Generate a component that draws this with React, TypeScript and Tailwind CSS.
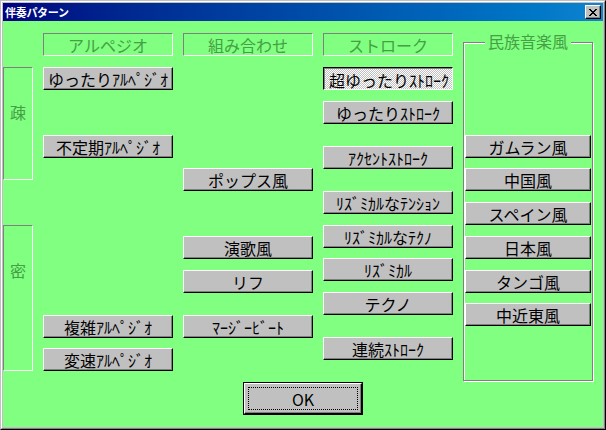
import type { ReactNode } from "react";

const FONT = "font-['Noto_Sans_CJK_JP','Noto_Sans_CJK_SC',sans-serif]";

type Item = { label: string; cls: string; pressed?: boolean };

const arpeggio: Item[] = [
  { label: "ゆったりｱﾙﾍﾟｼﾞｵ", cls: "mt-[11px]" },
  { label: "不定期ｱﾙﾍﾟｼﾞｵ", cls: "mt-[45px]" },
  { label: "複雑ｱﾙﾍﾟｼﾞｵ", cls: "mt-[157px]" },
  { label: "変速ｱﾙﾍﾟｼﾞｵ", cls: "mt-[10px]" },
];

const combo: Item[] = [
  { label: "ポップス風", cls: "mt-[112px]" },
  { label: "演歌風", cls: "mt-[45px]" },
  { label: "リフ", cls: "mt-[11px]" },
  { label: "ﾏｰｼﾞｰﾋﾞｰﾄ", cls: "mt-[22px]" },
];

const stroke: Item[] = [
  { label: "超ゆったりｽﾄﾛｰｸ", cls: "mt-[11px]", pressed: true },
  { label: "ゆったりｽﾄﾛｰｸ", cls: "mt-[11px]" },
  { label: "ｱｸｾﾝﾄｽﾄﾛｰｸ", cls: "mt-[22px]" },
  { label: "ﾘｽﾞﾐｶﾙなﾃﾝｼｮﾝ", cls: "mt-[22px]" },
  { label: "ﾘｽﾞﾐｶﾙなﾃｸﾉ", cls: "mt-[11px]" },
  { label: "ﾘｽﾞﾐｶﾙ", cls: "mt-[10px]" },
  { label: "テクノ", cls: "mt-[11px]" },
  { label: "連続ｽﾄﾛｰｸ", cls: "mt-[22px]" },
];

const ethnic: Item[] = [
  { label: "ガムラン風", cls: "mt-[92px]" },
  { label: "中国風", cls: "mt-[10px]" },
  { label: "スペイン風", cls: "mt-[11px]" },
  { label: "日本風", cls: "mt-[11px]" },
  { label: "タンゴ風", cls: "mt-[11px]" },
  { label: "中近東風", cls: "mt-[10px]" },
];

function Btn({ item, width = "w-[130px]" }: { item: Item; width?: string }) {
  if (item.pressed) {
    return (
      <div
        className={`${item.cls} ${width} h-[23px] shrink-0 flex items-center justify-center border border-t-black border-l-black border-r-white border-b-white shadow-[inset_1px_1px_0_#808080] bg-[repeating-conic-gradient(#c0c0c0_0_25%,#ffffff_0_50%)] bg-[length:2px_2px] text-[16px] leading-none text-black pt-[2px] pl-[2px] whitespace-nowrap`}
      >
        {item.label}
      </div>
    );
  }
  return (
    <div
      className={`${item.cls} ${width} h-[23px] shrink-0 flex items-center justify-center bg-[#c0c0c0] border border-t-white border-l-white border-r-black border-b-black shadow-[inset_-1px_-1px_0_#808080] text-[16px] leading-none text-black whitespace-nowrap`}
    >
      {item.label}
    </div>
  );
}

function Header({ children }: { children: ReactNode }) {
  return (
    <div className="mt-[12px] w-[130px] h-[23px] flex items-center justify-center border border-t-[#808080] border-l-[#808080] border-r-white border-b-white text-[16px] leading-none text-[#45a045]">
      {children}
    </div>
  );
}

function Column({ title, items }: { title: string; items: Item[] }) {
  return (
    <div className="w-[130px] ml-[10px] flex flex-col">
      <Header>{title}</Header>
      {items.map((it) => (
        <Btn key={it.label} item={it} />
      ))}
    </div>
  );
}

function SideBox({ label, cls }: { label: string; cls: string }) {
  return (
    <div
      className={`${cls} w-[30px] flex justify-center pt-[36px] border border-t-[#808080] border-l-[#808080] border-r-white border-b-white text-[16px] leading-none text-[#45a045]`}
    >
      {label}
    </div>
  );
}

export default function App() {
  return (
    <div className={`w-[606px] h-[430px] bg-[#c0c0c0] border border-t-[#c0c0c0] border-l-[#c0c0c0] border-r-black border-b-black ${FONT}`}>
      <div className="h-full flex flex-col border border-t-white border-l-white border-r-[#808080] border-b-[#808080] p-px">
        {/* title bar */}
        <div className="h-[18px] shrink-0 flex items-center justify-between bg-linear-to-r from-[#000080] to-[#1084d0] pl-[2px] pr-[2px]">
          <span className="text-[11px] font-bold leading-none text-white tracking-[-0.3px]">伴奏パターン</span>
          <div className="w-[16px] h-[14px] flex items-center justify-center bg-[#c0c0c0] border border-t-white border-l-white border-r-black border-b-black shadow-[inset_-1px_-1px_0_#808080]">
            <svg width="8" height="7" viewBox="0 0 8 7" shapeRendering="crispEdges">
              <path d="M0 0h2v1h-2zM6 0h2v1h-2zM1 1h2v1h-2zM5 1h2v1h-2zM2 2h4v1h-4zM3 3h2v1h-2zM2 4h4v1h-4zM1 5h2v1h-2zM5 5h2v1h-2zM0 6h2v1h-2zM6 6h2v1h-2z" fill="#000" />
            </svg>
          </div>
        </div>

        {/* client area */}
        <div className="flex-1 flex flex-col bg-[#80ff80]">
          <div className="flex items-start">
            <div className="w-[30px] flex flex-col">
              <SideBox label="疎" cls="mt-[46px] h-[113px]" />
              <SideBox label="密" cls="mt-[45px] h-[146px]" />
            </div>
            <Column title="アルペジオ" items={arpeggio} />
            <Column title="組み合わせ" items={combo} />
            <Column title="ストローク" items={stroke} />

            {/* group box */}
            <div className="relative ml-[10px] mt-[21px] w-[130px] h-[339px] flex flex-col border border-[#808080] shadow-[inset_1px_1px_0_#ffffff,1px_1px_0_#ffffff]">
              <span className="absolute left-1/2 -translate-x-1/2 -top-[10px] px-[3px] bg-[#80ff80] text-[16px] leading-none text-[#45a045] whitespace-nowrap">
                民族音楽風
              </span>
              {ethnic.map((it) => (
                <div key={it.label} className="pl-px">
                  <Btn item={it} width="w-[126px]" />
                </div>
              ))}
            </div>
          </div>

          {/* OK */}
          <div className="flex justify-center mt-px">
            <div className="w-[120px] h-[33px] border border-black">
              <div className="h-full flex items-center justify-center bg-[#c0c0c0] border border-t-white border-l-white border-r-black border-b-black shadow-[inset_-1px_-1px_0_#808080] p-[3px]">
                <div className="w-full h-full flex items-center justify-center border border-dotted border-black text-[16px] leading-none text-black">
                  OK
                </div>
              </div>
            </div>
          </div>
        </div>
      </div>
    </div>
  );
}
